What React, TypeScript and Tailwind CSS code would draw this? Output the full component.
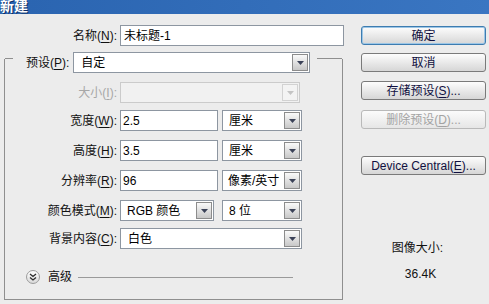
const Arrow = ({ disabled }: { disabled?: boolean }) => (
  <div
    className={
      disabled
        ? 'w-[16px] h-[17px] border border-[#d2d2d2] bg-[#f3f3f3] flex items-center justify-center'
        : 'w-[16px] h-[17px] border border-[#8c8c8c] bg-linear-to-b from-[#fafafa] to-[#c8c8c8] flex items-center justify-center'
    }
  >
    <svg width="7" height="4" viewBox="0 0 7 4">
      <path d="M0 0h7L3.5 4z" fill={disabled ? '#c4c4c4' : '#3b4258'} />
    </svg>
  </div>
);

const U = ({ c }: { c: string }) => <span className="underline underline-offset-2">{c}</span>;

function Select({ value, className, pl }: { value: string; className: string; pl: string }) {
  return (
    <div className={`h-[21px] border border-[#8d96a1] bg-white flex items-center justify-between pr-px ${className}`}>
      <span className={pl}>{value}</span>
      <Arrow />
    </div>
  );
}

function Input({ value, className }: { value: string; className: string }) {
  return (
    <div className={`h-[21px] border border-[#8d96a1] bg-white flex items-center pl-[2px] ${className}`}>
      {value}
    </div>
  );
}

function Label({ text, k, disabled }: { text: string; k: string; disabled?: boolean }) {
  return (
    <div className={`w-[112px] text-right ${disabled ? 'text-[#a7a7a7]' : 'text-[#111]'}`}>
      {text}(<U c={k} />):
    </div>
  );
}

function Button({ label, k, suffix, primary, disabled, className }: {
  label: string;
  k?: string;
  suffix?: string;
  primary?: boolean;
  disabled?: boolean;
  className: string;
}) {
  let look = 'border-[#7a7a7a] bg-linear-to-b from-[#fdfdfd] to-[#d6d6d6] text-[#101040]';
  if (primary) look = 'border-[#3d7cb0] bg-linear-to-b from-[#fdfdfd] to-[#d6d6d6] text-[#101040] shadow-[inset_0_0_0_1px_#9cc6e6]';
  if (disabled) look = 'border-[#b9b9b9] bg-linear-to-b from-[#fbfbfb] to-[#e6e6e6] text-[#a3a3a3]';
  return (
    <div className={`h-[19px] w-[125px] rounded-[3px] border flex items-center justify-center ${look} ${className}`}>
      {label}
      {k && (
        <>
          (<U c={k} />)
        </>
      )}
      {suffix}
    </div>
  );
}

export default function App() {
  return (
    <div className="w-[489px] h-[304px] overflow-hidden bg-[#ececec] text-[12px] leading-[14px] font-['Liberation_Sans','Noto_Sans_CJK_SC',sans-serif]">
      <div className="h-[14px] bg-linear-to-r from-[#2a64b0] to-[#3a76c2] overflow-hidden">
        <div className="-mt-[2px] text-[14px] leading-[16px] font-bold text-white [text-shadow:1px_1px_0_#0c2e66]">
          新建
        </div>
      </div>

      <div className="flex">
        <div className="w-[344px] flex flex-col">
          <div className="mt-[11px] flex items-center">
            <div className="w-[117px] text-right text-[#111]">
              名称(<U c="N" />):
            </div>
            <Input value="未标题-1" className="ml-[3px] w-[224px] pl-[3px]" />
          </div>

          <div className="ml-[4px] mt-[13px] w-[339px] border-x border-b border-[#8f8f8f] flex flex-col pb-[15px]">
            <div className="-mt-[7px] h-[21px] flex items-start">
              <div className="mt-[6px] w-[8px] h-px bg-[#8f8f8f]" />
              <div className="ml-[13px] h-[21px] flex items-center text-[#111]">
                预设(<U c="P" />):
              </div>
              <Select value="自定" className="ml-[4px] w-[237px]" pl="pl-[7px]" />
              <div className="mt-[6px] ml-[7px] flex-1 h-px bg-[#8f8f8f]" />
            </div>

            <div className="mt-[9px] flex items-center">
              <Label text="大小" k="I" disabled />
              <div className="ml-[3px] w-[180px] h-[21px] border border-[#cbcbcb] bg-[#f1f1f1] flex items-center justify-end pr-px">
                <Arrow disabled />
              </div>
            </div>

            <div className="mt-[7px] flex items-center">
              <Label text="宽度" k="W" />
              <Input value="2.5" className="ml-[3px] w-[98px]" />
              <Select value="厘米" className="ml-[4px] w-[80px]" pl="pl-[6px]" />
            </div>

            <div className="mt-[9px] flex items-center">
              <Label text="高度" k="H" />
              <Input value="3.5" className="ml-[3px] w-[98px]" />
              <Select value="厘米" className="ml-[4px] w-[80px]" pl="pl-[6px]" />
            </div>

            <div className="mt-[9px] flex items-center">
              <Label text="分辨率" k="R" />
              <Input value="96" className="ml-[3px] w-[98px]" />
              <Select value="像素/英寸" className="ml-[4px] w-[80px]" pl="pl-[5px]" />
            </div>

            <div className="mt-[9px] flex items-center">
              <Label text="颜色模式" k="M" />
              <Select value="RGB 颜色" className="ml-[3px] w-[94px]" pl="pl-[6px]" />
              <Select value="8 位" className="ml-[8px] w-[80px]" pl="pl-[6px]" />
            </div>

            <div className="mt-[7px] flex items-center">
              <Label text="背景内容" k="C" />
              <Select value="白色" className="ml-[3px] w-[182px]" pl="pl-[7px]" />
            </div>

            <div className="mt-[21px] h-[14px] flex items-center">
              <div className="ml-[21px] w-[14px] h-[14px] rounded-full border border-[#9c9c9c] bg-linear-to-b from-white to-[#d9d9d9] flex items-center justify-center">
                <svg width="8" height="8" viewBox="0 0 8 8">
                  <path d="M1 1l3 2.5L7 1M1 4.5L4 7l3-2.5" fill="none" stroke="#2d2d2d" strokeWidth="1.3" />
                </svg>
              </div>
              <span className="ml-[8px] text-[#111]">高级</span>
              <div className="ml-[6px] mr-[49px] flex-1 h-px bg-[#9a9a9a]" />
            </div>
          </div>
        </div>

        <div className="ml-[17px] w-[125px] flex flex-col items-center">
          <Button label="确定" primary className="mt-[12px]" />
          <Button label="取消" className="mt-[8px]" />
          <Button label="存储预设" k="S" suffix="..." className="mt-[9px]" />
          <Button label="删除预设" k="D" suffix="..." disabled className="mt-[10px]" />
          <Button label="Device Central" k="E" suffix="..." className="mt-[27px]" />
          <div className="mt-[66px] mr-[12px] text-[#111]">图像大小:</div>
          <div className="mt-[12px] mr-[6px] text-[#111]">36.4K</div>
        </div>
      </div>
    </div>
  );
}
